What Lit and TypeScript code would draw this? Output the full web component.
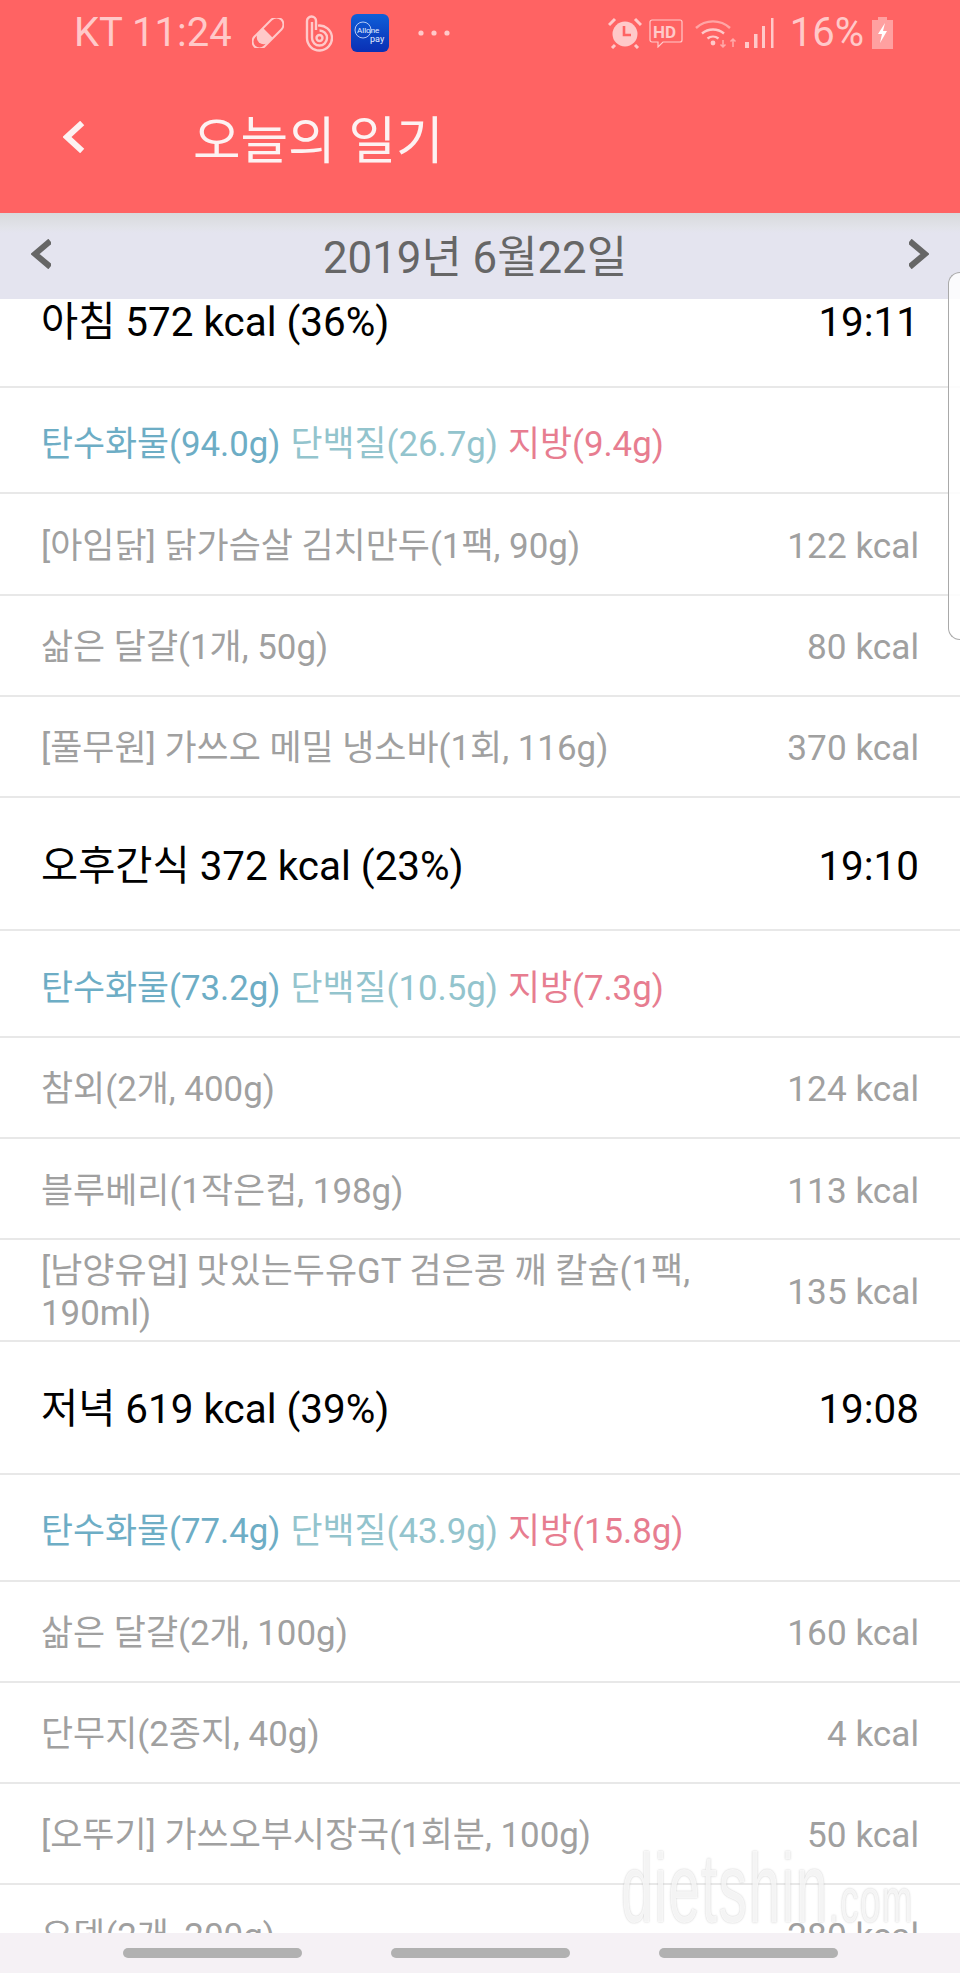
import { LitElement, html, css, svg } from 'lit';
import { customElement } from 'lit/decorators.js';

interface Food {
  name: string;
  kcal: number;
}

interface Meal {
  title: string;
  time: string;
  carb: string;
  protein: string;
  fat: string;
  foods: Food[];
}

const MEALS: Meal[] = [
  {
    title: '아침 572 kcal (36%)',
    time: '19:11',
    carb: '94.0g',
    protein: '26.7g',
    fat: '9.4g',
    foods: [
      { name: '[아임닭] 닭가슴살 김치만두(1팩, 90g)', kcal: 122 },
      { name: '삶은 달걀(1개, 50g)', kcal: 80 },
      { name: '[풀무원] 가쓰오 메밀 냉소바(1회, 116g)', kcal: 370 },
    ],
  },
  {
    title: '오후간식 372 kcal (23%)',
    time: '19:10',
    carb: '73.2g',
    protein: '10.5g',
    fat: '7.3g',
    foods: [
      { name: '참외(2개, 400g)', kcal: 124 },
      { name: '블루베리(1작은컵, 198g)', kcal: 113 },
      { name: '[남양유업] 맛있는두유GT 검은콩 깨 칼슘(1팩, 190ml)', kcal: 135 },
    ],
  },
  {
    title: '저녁 619 kcal (39%)',
    time: '19:08',
    carb: '77.4g',
    protein: '43.9g',
    fat: '15.8g',
    foods: [
      { name: '삶은 달걀(2개, 100g)', kcal: 160 },
      { name: '단무지(2종지, 40g)', kcal: 4 },
      { name: '[오뚜기] 가쓰오부시장국(1회분, 100g)', kcal: 50 },
      { name: '오뎅(2개, 200g)', kcal: 280 },
    ],
  },
];

const chevron = (points: string, w: number, h: number) => html`
  <svg width=${w} height=${h} viewBox="0 0 ${w} ${h}" fill="none" stroke="currentColor" stroke-width="6" stroke-linecap="square">
    ${svg`<polyline points=${points} />`}
  </svg>
`;

@customElement('app-root')
export class AppRoot extends LitElement {
  static styles = css`
    :host {
      display: block;
      width: 960px;
      height: 1973px;
      font-family: Roboto, "Noto Sans CJK KR", sans-serif;
    }
    .page {
      position: relative;
      height: 100%;
      display: flex;
      flex-direction: column;
      overflow: hidden;
      background: #fff;
    }
    .appbar {
      flex: none;
      height: 213px;
      background: #ff6363;
      color: #fff;
    }
    .status {
      height: 66px;
      display: flex;
      align-items: center;
      padding: 0 67px 0 74px;
      color: #ffc9c9;
      font-size: 40px;
      line-height: 66px;
    }
    .status svg {
      flex: none;
      display: block;
    }
    .status .spacer {
      flex: 1;
    }
    .clock {
      margin-right: 20px;
    }
    .i-b {
      margin-left: 21px;
    }
    .i-pay {
      margin-left: 18px;
    }
    .i-dots {
      margin-left: 29px;
    }
    .i-hd {
      margin-left: 7px;
    }
    .i-wifi {
      margin-left: 12px;
    }
    .i-signal {
      margin-left: 8px;
    }
    .pct {
      margin: 0 8px 0 16px;
    }
    .toolbar {
      height: 147px;
      display: flex;
      align-items: center;
      padding: 0 0 6px 63px;
      box-sizing: border-box;
      color: #fdf2f2;
    }
    .toolbar svg {
      display: block;
    }
    .toolbar h1 {
      margin: 0 0 0 108px;
      font-size: 51.7px;
      font-weight: 400;
    }
    .datebar {
      flex: none;
      height: 86px;
      box-sizing: border-box;
      display: flex;
      align-items: center;
      justify-content: space-between;
      padding: 0 31px;
      background: linear-gradient(#d8dadc, #e2e3ea 15px, #e4e4ef 20px);
      color: #666;
    }
    .datebar svg {
      display: block;
      margin-bottom: 4px;
    }
    .date {
      margin: 4px 10px 0 0;
      font-size: 43.8px;
      line-height: 60px;
    }
    .list {
      flex: 1;
      min-height: 0;
      overflow: hidden;
    }
    .rows {
      margin-top: -44.5px;
    }
    .row {
      box-sizing: border-box;
      display: flex;
      align-items: center;
      justify-content: space-between;
      padding: 0 41px;
      border-bottom: 2px solid #e8e8e8;
    }
    .meal {
      height: 133.33px;
      padding-top: 6px;
      font-size: 40.4px;
      line-height: 48px;
      color: #000;
    }
    .nutrients {
      height: 106.67px;
      justify-content: flex-start;
      gap: 10px;
      padding-top: 2px;
      font-size: 34.8px;
    }
    .carb {
      color: #6dadc5;
    }
    .protein {
      color: #93c4cd;
    }
    .fat {
      color: #e77d90;
    }
    .food {
      height: 101.2px;
      padding-top: 5px;
      font-size: 34.9px;
      line-height: 41.5px;
      color: #a0a0a0;
    }
    .food .name {
      max-width: 670px;
    }
    .food .kcal {
      flex: none;
      font-size: 35.2px;
    }
    .navbar {
      flex: none;
      height: 40px;
      position: relative;
      display: flex;
      align-items: center;
      justify-content: center;
      gap: 89px;
      background: #f5f1f5;
    }
    .navbar span {
      width: 179px;
      height: 10px;
      border-radius: 5px;
      background: #b1b1b1;
    }
    .handle {
      position: absolute;
      top: 272px;
      right: 0;
      width: 12px;
      height: 368px;
      box-sizing: border-box;
      background: rgba(255, 255, 255, 0.85);
      border: 1px solid #a9a9a9;
      border-right: none;
      border-radius: 12px 0 0 12px;
    }
    .mark {
      position: absolute;
      left: 621px;
      top: 1838px;
      font-family: "Liberation Sans", sans-serif;
      font-size: 84px;
      line-height: 84px;
      letter-spacing: 2px;
      white-space: nowrap;
      color: rgba(255, 255, 255, 0.8);
      text-shadow: 0 0 2px rgba(110, 110, 110, 0.4);
      transform: scale(0.68, 1.18);
      transform-origin: 0 0;
    }
    .mark small {
      font-size: 54px;
    }
  `;

  private statusLeft() {
    return html`
      <svg width="32" height="30" viewBox="0 0 32 30">
        <g transform="rotate(-45 16 15)">
          <rect x="-3" y="8" width="38" height="14" rx="7" fill="none" stroke="currentColor" stroke-width="2" />
          <path d="M10 8h6v14h-6a7 7 0 0 1 0-14z" fill="currentColor" />
        </g>
      </svg>
      <svg class="i-b" width="28" height="38" viewBox="0 0 28 38" fill="none" stroke="currentColor" stroke-width="2.4">
        <path d="M2 7a4.5 4.5 0 0 1 9 0v9" />
        <path d="M2 7v17a12.5 12.5 0 1 0 11-12.4" />
        <path d="M7 8v16a7.5 7.5 0 1 0 7.5-7.5" />
        <circle cx="14.5" cy="24" r="3" />
      </svg>
      <svg class="i-pay" width="38" height="38" viewBox="0 0 38 38">
        <defs>
          <linearGradient id="payfill" x1="0" y1="0" x2="0" y2="1">
            <stop offset="0" stop-color="#0f5fd8" />
            <stop offset="1" stop-color="#0a2fb4" />
          </linearGradient>
        </defs>
        <rect width="38" height="38" rx="6" fill="url(#payfill)" />
        <circle cx="12" cy="16" r="8" fill="none" stroke="#dfe9ff" stroke-width="0.8" />
        <text x="6" y="19" font-size="8" fill="#e6eeff" font-family="Roboto, sans-serif">Allone</text>
        <text x="19" y="28" font-size="9" fill="#e6eeff" font-family="Roboto, sans-serif">pay</text>
      </svg>
      <svg class="i-dots" width="32" height="8" viewBox="0 0 32 8" fill="currentColor">
        <circle cx="3" cy="4" r="2.6" /><circle cx="16" cy="4" r="2.6" /><circle cx="29" cy="4" r="2.6" />
      </svg>
    `;
  }

  private statusRight() {
    return html`
      <svg width="34" height="32" viewBox="0 0 34 32">
        <circle cx="17" cy="17" r="12.5" fill="currentColor" />
        <path d="M16 9v9h7" fill="none" stroke="#ff6363" stroke-width="2.6" />
        <path d="M1 8l6-6M33 8l-6-6M7 28l-3 3M27 28l3 3" stroke="currentColor" stroke-width="3" />
      </svg>
      <svg class="i-hd" width="34" height="29" viewBox="0 0 34 29" fill="none" stroke="currentColor">
        <path d="M3 1h28a2 2 0 0 1 2 2v18a2 2 0 0 1-2 2H14l-5 5v-5H3a2 2 0 0 1-2-2V3a2 2 0 0 1 2-2z" stroke-width="1.2" />
        <text x="4" y="19" font-size="17" font-weight="700" fill="currentColor" stroke="none" font-family="Roboto, sans-serif">HD</text>
      </svg>
      <svg class="i-wifi" width="42" height="31" viewBox="0 0 42 31" fill="none" stroke="currentColor" stroke-width="2.4">
        <path d="M1 10a25 25 0 0 1 34 0" opacity="0.65" />
        <path d="M7 15.500a17 17 0 0 1 22 0" />
        <path d="M12.500 20.500a9 9 0 0 1 11 0" />
        <circle cx="18" cy="25" r="2.400" fill="currentColor" stroke="none" />
        <path d="M28 22v7m-2.500-2.500l2.500 2.500 2.500-2.500M38 29v-8m-2.500 2.500l2.500-2.500 2.500 2.500" stroke-width="1.500" opacity="0.7" />
      </svg>
      <svg class="i-signal" width="29" height="30" viewBox="0 0 29 30" fill="currentColor">
        <rect x="0" y="24" width="4" height="6" />
        <rect x="9" y="16" width="3.500" height="14" />
        <rect x="17" y="8" width="3" height="22" />
        <rect x="26" y="0" width="2.500" height="30" />
      </svg>
      <span class="pct">16%</span>
      <svg width="21" height="32" viewBox="0 0 21 32">
        <path d="M6 0h9v3h6v29H0V3h6z" fill="currentColor" opacity="0.6" />
        <path d="M13 6l-7 11h4l-2 9 7-12h-4z" fill="#fff" />
      </svg>
    `;
  }

  private renderMeal(meal: Meal) {
    return html`
      <div class="row meal">
        <span>${meal.title}</span>
        <span>${meal.time}</span>
      </div>
      <div class="row nutrients">
        <span class="carb">탄수화물(${meal.carb})</span>
        <span class="protein">단백질(${meal.protein})</span>
        <span class="fat">지방(${meal.fat})</span>
      </div>
      ${meal.foods.map(
        (food) => html`
          <div class="row food">
            <span class="name">${food.name}</span>
            <span class="kcal">${food.kcal} kcal</span>
          </div>
        `
      )}
    `;
  }

  render() {
    return html`
      <div class="page">
        <header class="appbar">
          <div class="status">
            <span class="clock">KT 11:24</span>
            ${this.statusLeft()}
            <span class="spacer"></span>
            ${this.statusRight()}
          </div>
          <div class="toolbar">
            ${chevron('17,4 4,16 17,28', 22, 32)}
            <h1>오늘의 일기</h1>
          </div>
        </header>
        <div class="datebar">
          ${chevron('17,4 4,15 17,26', 20, 30)}
          <span class="date">2019년 6월22일</span>
          ${chevron('3,4 16,15 3,26', 20, 30)}
        </div>
        <main class="list">
          <div class="rows">${MEALS.map((meal) => this.renderMeal(meal))}</div>
        </main>
        <nav class="navbar"><span></span><span></span><span></span></nav>
        <div class="handle"></div>
        <div class="mark">dietshin<small>.com</small></div>
      </div>
    `;
  }
}
